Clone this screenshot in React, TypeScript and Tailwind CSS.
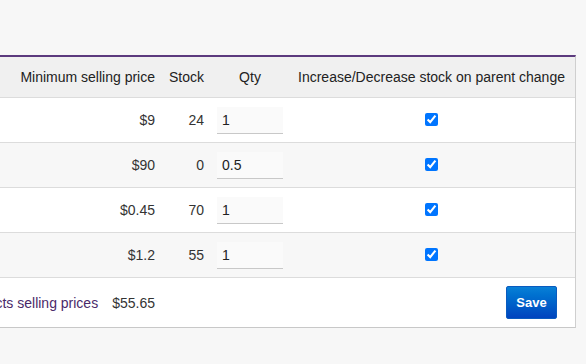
import React from "react";

const rows = [
  { price: "$9", stock: "24", qty: "1", bg: "bg-white" },
  { price: "$90", stock: "0", qty: "0.5", bg: "bg-[#f7f7f7]" },
  { price: "$0.45", stock: "70", qty: "1", bg: "bg-white" },
  { price: "$1.2", stock: "55", qty: "1", bg: "bg-[#f7f7f7]" },
];

const grid = "grid grid-cols-[214px_149px_49px_76px_287px]";

export default function App() {
  return (
    <div
      className="min-h-[364px] w-[586px] overflow-hidden bg-[#f7f7f7] pt-[55px] text-[14px] leading-[16px] text-[#333]"
      style={{ fontFamily: "'Liberation Sans', Arial, sans-serif" }}
    >
      <div className="ml-[-200px] w-[776px] border-t-2 border-r border-b border-t-[#5c3a7e] border-r-[#cfcfcf] border-b-[#c8c8c8] bg-white">
        <div className={`${grid} h-[41px] items-center border-b border-[#dcdcdc] bg-[#f0f0f0] text-[#222]`}>
          <div />
          <div className="pr-2 text-right">Minimum selling price</div>
          <div className="pr-2 text-right">Stock</div>
          <div className="text-center">Qty</div>
          <div className="text-center">Increase/Decrease stock on parent change</div>
        </div>
        {rows.map((r, i) => (
          <div key={i} className={`${grid} h-[45px] items-center border-b border-[#dcdcdc] ${r.bg}`}>
            <div />
            <div className="pr-2 text-right">{r.price}</div>
            <div className="pr-2 text-right">{r.stock}</div>
            <div className="flex justify-center">
              <input
                readOnly
                value={r.qty}
                className="h-[27px] w-[66px] border-b border-[#c8c8c8] bg-[#fafafa] pl-[5px] text-[14px] text-[#222] outline-none"
                style={{ fontFamily: "'Liberation Sans', Arial, sans-serif" }}
              />
            </div>
            <div className="flex justify-center">
              <input type="checkbox" checked readOnly className="m-0 -mt-[2px] block h-[13px] w-[13px]" />
            </div>
          </div>
        ))}
        <div className="flex h-[49px] items-center">
          <div className="flex w-[363px] items-center justify-end gap-[14px] pr-2">
            <span className="text-[#4a2a6a]">Sum of products selling prices</span>
            <span className="text-[#333]">$55.65</span>
          </div>
          <div className="flex flex-1 justify-end pr-[18px]">
            <button className="h-[33px] w-[51px] rounded-[2px] border border-[#0a5bbf] bg-linear-to-b from-[#0a80d6] to-[#0043be] text-[13px] font-bold text-white">
              Save
            </button>
          </div>
        </div>
      </div>
    </div>
  );
}
